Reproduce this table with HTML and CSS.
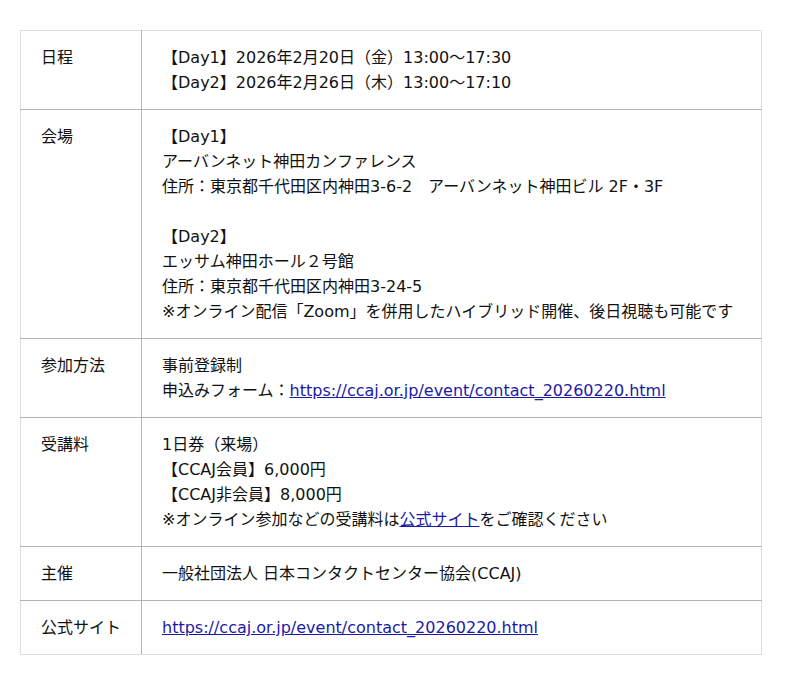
FILE: index.html
```html
<!DOCTYPE html>
<html lang="ja">
<head>
<meta charset="utf-8">
<title>開催概要</title>
<link rel="stylesheet" href="styles.css">
</head>
<body>
<table class="info">
  <tr>
    <th class="label">日程</th>
    <td class="value">【Day1】2026年2月20日（金）13:00〜17:30<br>【Day2】2026年2月26日（木）13:00〜17:10</td>
  </tr>
  <tr>
    <th class="label">会場</th>
    <td class="value">【Day1】<br>アーバンネット神田カンファレンス<br>住所：東京都千代田区内神田3-6-2　アーバンネット神田ビル 2F・3F<br><br>【Day2】<br>エッサム神田ホール２号館<br>住所：東京都千代田区内神田3-24-5<br>※オンライン配信「Zoom」を併用したハイブリッド開催、後日視聴も可能です</td>
  </tr>
  <tr>
    <th class="label">参加方法</th>
    <td class="value">事前登録制<br>申込みフォーム：<a class="link" href="#">https://ccaj.or.jp/event/contact_20260220.html</a></td>
  </tr>
  <tr>
    <th class="label">受講料</th>
    <td class="value">1日券（来場）<br>【CCAJ会員】6,000円<br>【CCAJ非会員】8,000円<br>※オンライン参加などの受講料は<a class="link" href="#">公式サイト</a>をご確認ください</td>
  </tr>
  <tr>
    <th class="label">主催</th>
    <td class="value">一般社団法人 日本コンタクトセンター協会(CCAJ)</td>
  </tr>
  <tr>
    <th class="label">公式サイト</th>
    <td class="value"><a class="link" href="#">https://ccaj.or.jp/event/contact_20260220.html</a></td>
  </tr>
</table>
</body>
</html>
```
FILE: styles.css
```css
html, body {
  margin: 0;
  padding: 0;
  background: #ffffff;
}
body {
  padding: 30px 20px;
  font-family: "DejaVu Sans", "Noto Sans CJK JP", sans-serif;
  font-size: 16px;
  line-height: 25px;
  color: #111111;
}
.info {
  border-collapse: collapse;
  width: 742px;
  border: 1px solid #dddddd;
}
.info th,
.info td {
  border-top: 1px solid #b4b4b4;
  border-bottom: 1px solid #b4b4b4;
  padding: 14px 20px;
  vertical-align: top;
  text-align: left;
  font-weight: normal;
}
.info tr:first-child th,
.info tr:first-child td {
  border-top-color: #dddddd;
}
.info tr:last-child th,
.info tr:last-child td {
  border-bottom-color: #dddddd;
}
.label {
  width: 80px;
  border-left: 1px solid #dddddd;
  border-right: 1px solid #b4b4b4;
}
.value {
  border-right: 1px solid #dddddd;
}
.link {
  color: #1a1aa6;
  text-decoration: underline;
}
```
